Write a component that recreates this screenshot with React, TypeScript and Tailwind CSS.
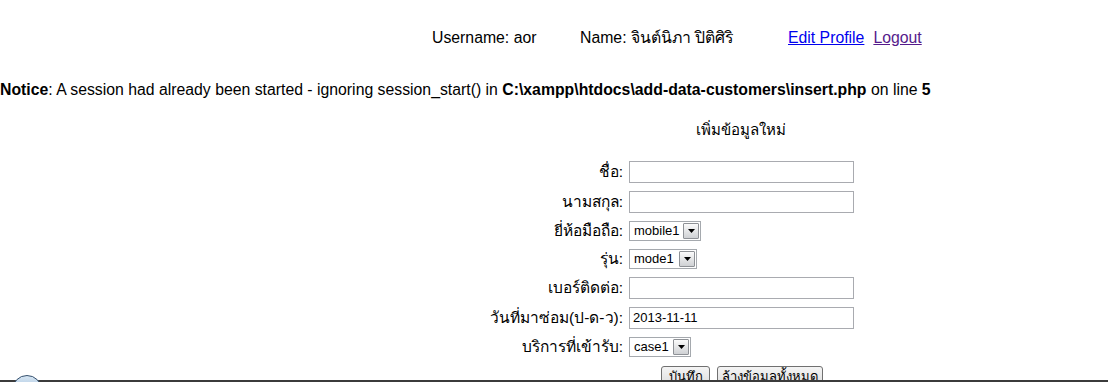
const TextBox = ({ value = "" }: { value?: string }) => (
  <div className="flex h-[22px] w-[225px] items-center border border-[#a9abb0] bg-white pl-[3px] text-[13px]">
    {value}
  </div>
);

const FakeSelect = ({ value, width }: { value: string; width: string }) => (
  <div className={`flex h-[20px] items-center justify-between border border-[#a5a9ae] bg-white pl-[4px] pr-[1px] text-[13px] ${width}`}>
    <span>{value}</span>
    <span className="flex h-[16px] w-[16px] items-center justify-center rounded-[1px] border border-[#8e9196] bg-gradient-to-b from-[#fbfbfb] to-[#cfd1d4]">
      <svg width="7" height="4" viewBox="0 0 7 4">
        <path d="M0 0h7L3.5 4z" fill="#000" />
      </svg>
    </span>
  </div>
);

const Row = ({ label, h, children }: { label: string; h: string; children: React.ReactNode }) => (
  <div className={`flex items-center ${h}`}>
    <div className="w-[623px] text-right text-[15.5px]">{label}</div>
    <div className="ml-[6px]">{children}</div>
  </div>
);

const WinButton = ({ text, width }: { text: string; width: string }) => (
  <div className={`flex h-[22px] items-center justify-center rounded-[3px] border border-[#707070] bg-gradient-to-b from-[#f4f4f4] to-[#dcdcdc] text-[13px] ${width}`}>
    {text}
  </div>
);

export default function App() {
  return (
    <div className="relative h-[382px] w-[1108px] overflow-hidden bg-white font-['Liberation_Sans',Arial,sans-serif] text-[16px] leading-[18px] text-black">
      <div className="mt-[29px] flex h-[18px] pl-[432px] text-[15.8px]">
        <span className="w-[148px]">Username: aor</span>
        <span className="w-[208px]">Name: จินต์นิภา ปิติศิริ</span>
        <a className="text-[#0000ee] underline">Edit Profile</a>
        <a className="ml-[9px] text-[#551a8b] underline">Logout</a>
      </div>

      <div className="mt-[34px] h-[18px] whitespace-nowrap text-[15.8px]">
        <b>Notice</b>: A session had already been started - ignoring session_start() in{" "}
        <b>C:\xampp\htdocs\add-data-customers\insert.php</b> on line <b>5</b>
      </div>

      <div className="mt-[22px] h-[18px] pl-[696px] text-[15px]">เพิ่มข้อมูลใหม่</div>

      <div className="mt-[18px]">
        <Row label="ชื่อ:" h="h-[30px]">
          <TextBox />
        </Row>
        <Row label="นามสกุล:" h="h-[30px]">
          <TextBox />
        </Row>
        <Row label="ยี่ห้อมือถือ:" h="h-[28px]">
          <FakeSelect value="mobile1" width="w-[72px]" />
        </Row>
        <Row label="รุ่น:" h="h-[28px]">
          <FakeSelect value="mode1" width="w-[68px]" />
        </Row>
        <Row label="เบอร์ติดต่อ:" h="h-[30px]">
          <TextBox />
        </Row>
        <Row label="วันที่มาซ่อม(ป-ด-ว):" h="h-[30px]">
          <TextBox value="2013-11-11" />
        </Row>
        <Row label="บริการที่เข้ารับ:" h="h-[28px]">
          <FakeSelect value="case1" width="w-[62px]" />
        </Row>
        <div className="flex gap-[7px] pl-[661px] pt-[5px]">
          <WinButton text="บันทึก" width="w-[49px]" />
          <WinButton text="ล้างข้อมูลทั้งหมด" width="w-[106px]" />
        </div>
      </div>

      {/* taskbar edge */}
      <div className="absolute bottom-0 left-0 h-[2px] w-full bg-[#3b3b3b]" />
      <div className="absolute left-[12px] top-[375px] h-[30px] w-[30px] rounded-full border border-[#35506e] bg-gradient-to-b from-[#d7e6f3] to-[#7fa6cc]" />
    </div>
  );
}
